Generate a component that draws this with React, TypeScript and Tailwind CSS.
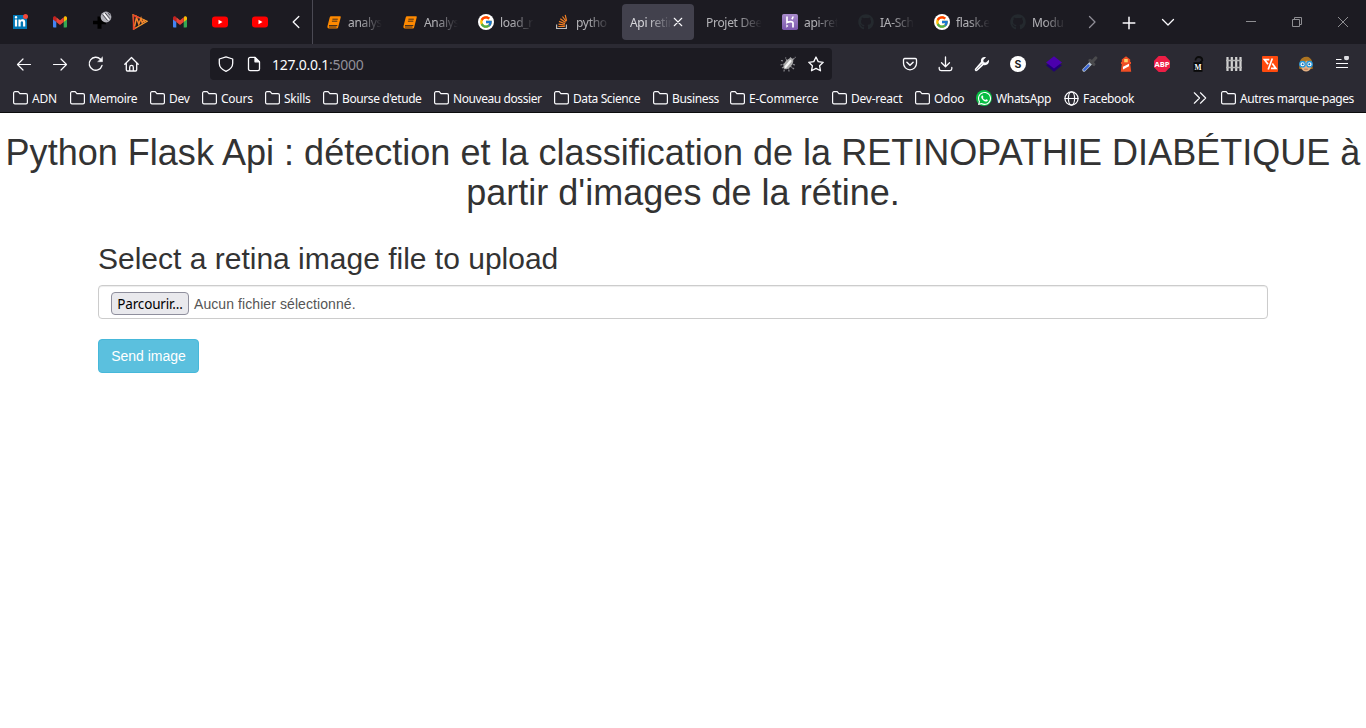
import type { ReactNode } from "react";
import { FcGoogle } from "react-icons/fc";
import { FaGithub, FaLinkedinIn, FaWhatsapp } from "react-icons/fa";

type IconProps = { children: ReactNode; size?: number; stroke?: string };

function Line({ children, size = 16, stroke = "#fbfbfe" }: IconProps) {
  return (
    <svg width={size} height={size} viewBox="0 0 16 16" fill="none" stroke={stroke} strokeWidth="1.3" strokeLinecap="round" strokeLinejoin="round" className="shrink-0">
      {children}
    </svg>
  );
}

function Art({ children }: { children: ReactNode }) {
  return <svg width="16" height="16" viewBox="0 0 16 16" className="shrink-0">{children}</svg>;
}

const Gmail = () => (
  <Art>
    <path d="M1 4v8.500c0 .5.4 1 1 1h2.300V7z" fill="#4285f4" />
    <path d="M15 4v8.500c0 .5-.4 1-1 1h-2.300V7z" fill="#34a853" />
    <path d="M11.700 4v4L15 5.500V4c0-1.600-1.800-2.200-2.800-1.300z" fill="#fbbc04" />
    <path d="M4.300 4v4L1 5.500V4c0-1.600 1.800-2.200 2.800-1.300z" fill="#c5221f" />
    <path d="M4.300 8V3.300L8 6.200l3.700-2.900V8L8 10.900z" fill="#ea4335" />
  </Art>
);

const Youtube = () => (
  <Art>
    <rect x="0" y="2.400" width="16" height="11.200" rx="3" fill="#f00" />
    <path d="M6.500 5.700v4.600l4-2.300z" fill="#fff" />
  </Art>
);

const LinkedIn = () => (
  <span className="relative flex size-[14px] items-center justify-center bg-[#0077b5]">
    <FaLinkedinIn size={12} color="#fff" />
    <span className="absolute -right-px -top-px size-[5px] rounded-full bg-[#f0483a]" />
  </span>
);

const PlusDisc = () => (
  <svg width="20" height="20" viewBox="0 0 20 20">
    <path d="M5.500 6.500h4v4.300h4.500v3.500H9.500v4.500h-4v-4.500H1v-3.500h4.500z" fill="#000" />
    <circle cx="14" cy="7" r="5.400" fill="#b4b4bc" />
    <path d="m10.500 4.500 5 6M13 2.800l5 6M16 2.500l2 3" stroke="#4c4c54" strokeWidth="1" />
    <path d="m11.800 3.500 5 6.300" stroke="#fff" strokeWidth="1.300" />
  </svg>
);

const Sketch = () => (
  <Art>
    <path d="M1 .800 15.200 7.300 2 15Z" fill="none" stroke="#f59a30" strokeWidth="1.200" />
    <path d="m2.500 12.500 2-9 2.300 6.500L9 4.500l1.200 4.500 1.700-2.700.8 1.700" fill="none" stroke="#f4842b" strokeWidth="1.500" />
    <path d="M1.500 1v14l2.500-1.700M1 1l6.500 3" stroke="#e9442a" strokeWidth="1.400" fill="none" />
  </Art>
);

const Book = () => (
  <span className="flex size-4 items-center justify-center pr-px">
    <svg width="14" height="13" viewBox="0 0 14 13">
      <path d="M4.200.300h8.700c.7 0 1 .5.800 1.200l-2.600 9.900c-.2.700-.8 1.100-1.400 1.100H2C.700 12.500.100 11.300.5 10L2.700 1.500C2.900.700 3.500.3 4.200.3Z" fill="#ff8a00" />
      <path d="M5.400 3.200h5.400M4.900 5.200h5.400M2 9.500h8.300M2 11h7.500" stroke="#1c1b22" strokeWidth=".8" />
    </svg>
  </span>
);

const GoogleBadge = () => (
  <span className="flex size-4 items-center justify-center rounded-full bg-white"><FcGoogle size={14} /></span>
);

const StackOverflow = () => (
  <Art>
    <path d="M2.600 10.500v4h9.800v-4" fill="none" stroke="#bcbbbb" strokeWidth="1.200" />
    <path d="M4.300 12.500h6.500M4.500 10.100l6.400 1M5 7.400l6 2.400M6.300 4.800l5.200 3.800M8.500 2.500l3.700 5M11.200.9l1.400 6" stroke="#f48024" strokeWidth="1.200" />
  </Art>
);

const Heroku = () => (
  <Art>
    <defs><linearGradient id="heroku" x2="0" y2="1"><stop stopColor="#a88bcb" /><stop offset="1" stopColor="#7c58ad" /></linearGradient></defs>
    <rect width="16" height="16" rx="1.800" fill="url(#heroku)" />
    <path d="M5 2.500v6c2-1 6-1.700 6 .6v4.400M11 2.500c-.1 1.200-.6 2-1.200 2.700" fill="none" stroke="#fff" strokeWidth="1.700" />
    <path d="M4.300 10.300 6.400 12l-2.100 1.700z" fill="#fff" />
  </Art>
);

const Github = () => <FaGithub size={16} color="#24292e" />;

const pinned = [LinkedIn, Gmail, PlusDisc, Sketch, Gmail, Youtube, Youtube];

const tabs: { label: string; Icon?: () => ReactNode; active?: boolean }[] = [
  { label: "analys", Icon: Book },
  { label: "Analys", Icon: Book },
  { label: "load_r", Icon: GoogleBadge },
  { label: "pytho", Icon: StackOverflow },
  { label: "Api retin", active: true },
  { label: "Projet Dee" },
  { label: "api-ret", Icon: Heroku },
  { label: "IA-Sch", Icon: Github },
  { label: "flask.e", Icon: GoogleBadge },
  { label: "Modu", Icon: Github },
];

function TabBar() {
  return (
    <div className="flex h-11 items-center bg-[#1c1b22]">
      {pinned.map((Icon, i) => (
        <div key={i} className={i === 2 ? "flex w-10 items-center justify-center pb-1 pl-1" : "flex w-10 items-center justify-center"}><Icon /></div>
      ))}
      <div className="flex w-8 items-center justify-center">
        <Line><path d="M10.800 2.500 5.200 8l5.600 5.500" /></Line>
      </div>
      <div className="h-full w-[6px] border-l border-[#4a4953]" />
      <div className="flex gap-1">
        {tabs.map(({ label, Icon, active }, i) => (
          <div key={i} className={active ? "flex h-9 w-[72px] items-center rounded bg-[#42414d] pl-2" : "flex h-9 w-[72px] items-center pl-2"}>
            {Icon && <span className="mr-[6px] flex w-4 shrink-0"><Icon /></span>}
            <span className={
              active
                ? "w-[42px] whitespace-nowrap pt-[2px] tracking-[-0.3px] text-[#fbfbfe] [mask-image:linear-gradient(to_right,#000c_40%,transparent_100%)]"
                : Icon
                  ? "w-[34px] whitespace-nowrap pt-[2px] tracking-[-0.3px] text-[#fbfbfe] [mask-image:linear-gradient(to_right,#000a_35%,transparent_100%)]"
                  : "w-[56px] whitespace-nowrap pt-[2px] tracking-[-0.3px] text-[#fbfbfe] [mask-image:linear-gradient(to_right,#000a_55%,transparent_100%)]"
            }>{label}</span>
            {active && <Line size={12}><path d="M3 3l10 10M13 3 3 13" strokeWidth="1.500" /></Line>}
          </div>
        ))}
      </div>
      <div className="flex w-[34px] justify-center pl-px"><Line stroke="#908f98"><path d="M5.500 2.500 11 8l-5.500 5.500" /></Line></div>
      <div className="flex w-10 justify-center pl-px pt-px"><Line><path d="M8 2.200v11.600M2.200 8h11.600" strokeWidth="1.500" /></Line></div>
      <div className="flex w-10 justify-center"><Line><path d="M2.500 5.500 8 11l5.500-5.500" /></Line></div>
      <div className="ml-auto flex">
        <div className="flex w-[46px] justify-center"><svg width="10" height="10"><path d="M0 4.500h10" stroke="#8e8e92" /></svg></div>
        <div className="flex w-[46px] justify-center"><svg width="10" height="10" fill="none" stroke="#8e8e92"><path d="M.5 2.500h7v7h-7zM2.500 2.500v-2h7v7h-2" /></svg></div>
        <div className="flex w-[46px] justify-center"><svg width="10" height="10" stroke="#8e8e92"><path d="m0 0 10 10M10 0 0 10" /></svg></div>
      </div>
    </div>
  );
}

const Bug = () => (
  <Art>
    <path d="M1 4.500 3.500 5M.5 9l4-1M4 15.500l.5-4M9 15.500 8.500 11M7 5 5.500 1.500M15 9l-5-1.500M14 13l-4-3M10 3l1-2.500M13 3.500l2.500-2.500M2 12l3-2" stroke="#8b8b90" strokeWidth="1.200" strokeDasharray="2 .7" />
    <ellipse cx="8.300" cy="7.700" rx="3.600" ry="6.600" transform="rotate(39 8.300 7.700)" fill="#acacac" />
    <path d="M5.500 11 10.500 5" stroke="#f4f4f4" strokeWidth="2.200" strokeLinecap="round" />
  </Art>
);

const extensions: ReactNode[] = [
  <Line key="pocket"><path d="M2.700 2.500h10.600c.7 0 1.200.5 1.200 1.200v3.600a6.500 6.500 0 0 1-13 0V3.700c0-.7.500-1.200 1.200-1.200Z" /><path d="m4.900 6.300 3.100 3 3.100-3" strokeWidth="1.500" /></Line>,
  <Line key="download"><path d="M7.500 1v9.500M3.500 6.800l4 3.900 4-3.900M1.200 11.500v1.300c0 1.100.7 1.800 1.800 1.800h9c1.100 0 1.800-.7 1.800-1.800v-1.300" /></Line>,
  <Art key="wrench"><path d="M14.900 3.800 12 6.600 9.700 6.200 9.300 4 12 1.200C8.800.2 6.300 2.700 7 5.800L1.200 12.500C-.2 14.200 1.900 16.100 3.400 14.800L9.700 9c3.400.9 6.100-1.800 5.200-5.200Z" fill="#fbfbfe" /><path d="m2.300 13.700 5.900-6.100" stroke="#2b2a33" strokeWidth=".5" /></Art>,
  <Art key="s"><circle cx="8" cy="8" r="8" fill="#fff" /><text x="8" y="11.800" textAnchor="middle" fontSize="10.500" fontWeight="700" fontFamily="Inter, sans-serif" fill="#222">S</text></Art>,
  <Art key="layers"><path d="m0 9.300 8-5 8 5-8 6.500z" fill="#210075" /><path d="m0 6.600 8-6.300 8 6.300-8 6z" fill="#4b00ad" /></Art>,
  <Art key="dropper"><path d="M2 14 9 7" stroke="#b9c6d3" strokeWidth="3.300" strokeLinecap="round" /><path d="m2.300 13.700 4.200-4.200" stroke="#3b66d8" strokeWidth="2.300" strokeLinecap="round" /><path d="m8 4.500 3.800 3.800M10.500 5.500 13.700 2" stroke="#4a4a4d" strokeWidth="3.200" strokeLinecap="round" /></Art>,
  <Art key="lighthouse"><path d="M3.800 3.500 8 .3l4.200 3.200V6h.8v2h-.8l1 7.700H2.800L3.800 8H3V6h.8z" fill="#f04e24" /><path d="M6.200 3h3.600v3.300H6.200z" fill="#ffd36b" /><path d="m5 10.800 6-3v2.500l-6 3.200z" fill="#fff" /></Art>,
  <Art key="abp"><path d="M4.700 0h6.600L16 4.700v6.600L11.300 16H4.700L0 11.300V4.700z" fill="#ed1e45" /><text x="8" y="10.800" textAnchor="middle" fontSize="7.600" fontWeight="700" fontFamily="Open Sans, sans-serif" fill="#fff">ABP</text></Art>,
  <Art key="lock"><path d="M5.500 4.500C5.300-.3 12.300 0 12.300 4.500L9.800 7" fill="none" stroke="#0b0b0b" strokeWidth="1.800" /><rect x="3.500" y="6.200" width="9" height="9.600" fill="#090909" /><text x="8" y="13.700" textAnchor="middle" fontSize="7.500" fontWeight="700" fontFamily="Liberation Serif, serif" fill="#fff">M</text></Art>,
  <Art key="fence"><path d="M1.500 1v14M5.800 1v14M10.200 1v14M14.500 1v14" stroke="#d2d2d2" strokeWidth="2.200" /><path d="M0 4.500h16M0 11.500h16" stroke="#b5b5b5" strokeWidth="1.500" /></Art>,
  <Art key="code"><rect width="16" height="16" rx="1" fill="#ff4a0d" /><path d="M10.300 2.500 6.200 13.500" stroke="#fff" strokeWidth="1.700" /><path d="M7.300 3.700H2.500L6 8.300M10.300 7.500l3.500 4.800H9" fill="none" stroke="#fff" strokeWidth="1.800" /></Art>,
  <Art key="face"><path d="M1 12.500C2.500 8 .8 4.500 4 2.300 7 .3 10 .5 12 2.300c3.300 2.500 1.500 6 3 10.200l-3.500 1h-7z" fill="#ad7421" /><path d="M3.200 6.500C6 6.500 8 5.700 9 4.500c1 1 2.500 1.700 4 2v4.700c-1 5.700-8.800 5.700-9.800 0z" fill="#e6b183" /><circle cx="4.500" cy="8.200" r="2.700" fill="#fff" stroke="#2298df" strokeWidth="1.300" /><circle cx="11.500" cy="8.200" r="2.700" fill="#fff" stroke="#2298df" strokeWidth="1.300" /><circle cx="4.700" cy="8.200" r="1" fill="#1967a5" /><circle cx="11.300" cy="8.200" r="1" fill="#1967a5" /><path d="M6.200 13.200h3.600" stroke="#b66c50" /></Art>,
  <Art key="menu"><path d="M2 3.500h5.500M2 7.500h12M2 11.500h12" stroke="#fbfbfe" strokeWidth="1.200" /><circle cx="12.500" cy="1.800" r="2.500" fill="#dddde2" /></Art>,
];

function NavBar() {
  return (
    <div className="flex h-10 items-center bg-[#2b2a33]">
      <div className="flex w-[210px] items-center gap-5 pl-4">
        <Line><path d="M14.500 8.500H1.800M7 3 1.500 8.500 7 14" strokeWidth="1.200" /></Line>
        <Line><path d="M1.500 8.500h12.700M9 3 14.500 8.500 9 14" strokeWidth="1.200" /></Line>
        <Line><path d="M14 9.500A6.500 6.500 0 1 1 12.500 3.300" /><path d="M14.500 1.200v4.500H10z" fill="#fbfbfe" strokeWidth=".5" /></Line>
        <Line><path d="M.8 8.200 7.500 1.500l6.700 6.700M2.300 7.300v6.500c0 .8.500 1.200 1.200 1.200h8c.7 0 1.200-.5 1.200-1.200V7.300M5.700 14.800v-3.600a1.800 1.800 0 0 1 3.600 0v3.600" /></Line>
      </div>
      <div className="flex h-8 w-[622px] items-center rounded bg-[#1c1b22] pl-2 pr-2">
        <Line><path d="M8 .9 14.700 3v4.300c0 3.700-3 6.500-6.700 8.100C4.300 13.800 1.300 11 1.300 7.300V3z" /></Line>
        <span className="ml-3 flex"><Line><path d="M4.200 1.400H9l4.500 4.500v7c0 1-.6 1.700-1.700 1.700H4.200c-1.100 0-1.700-.7-1.700-1.700V3.100c0-1 .6-1.700 1.700-1.700Z" /><path d="M9 1.500v4.300h4.300z" fill="#fbfbfe" /></Line></span>
        <span className="ml-[10px] pt-[2px] text-[14px] leading-5 tracking-[-0.26px] text-[#fbfbfe]">127.0.0.1<span className="text-[#918f99]">:5000</span></span>
        <span className="ml-auto flex gap-3"><Bug /><Line><path d="m8 1 2.200 4.600 5 .7-3.600 3.500.9 5L8 12.400l-4.500 2.400.9-5L.8 6.300l5-.7z" /></Line></span>
      </div>
      <div className="ml-[70px] flex gap-5">{extensions}</div>
    </div>
  );
}

const Folder = () => (
  <svg width="15" height="14" viewBox="0 0 15 14" fill="none" stroke="#fbfbfe" strokeWidth="1.200" strokeLinejoin="round" className="shrink-0">
    <path d="M2 .700h3.200l1.700 1.900H13c.9 0 1.400.5 1.400 1.400v7.500c0 .9-.5 1.400-1.400 1.400H2c-.9 0-1.400-.5-1.400-1.400V2.100C.6 1.200 1.100.7 2 .7Z" />
  </svg>
);

const bookmarks = [
  { label: "ADN", style: "w-[57px]" },
  { label: "Memoire", style: "w-[80px] tracking-[-0.35px]" },
  { label: "Dev", style: "w-[52px]" },
  { label: "Cours", style: "w-[63px]" },
  { label: "Skills", style: "w-[58px]" },
  { label: "Bourse d'etude", style: "w-[111px] tracking-[-0.4px]" },
  { label: "Nouveau dossier", style: "w-[120px] tracking-[-0.42px]" },
  { label: "Data Science", style: "w-[99px] tracking-[-0.4px]" },
  { label: "Business", style: "w-[77px] tracking-[-0.35px]" },
  { label: "E-Commerce", style: "w-[102px]" },
  { label: "Dev-react", style: "w-[83px]" },
  { label: "Odoo", style: "w-[61px]" },
];

function BookmarksBar() {
  return (
    <div className="flex h-[29px] items-center whitespace-nowrap border-b border-[#0c0c0d] bg-[#2b2a33] pl-[13px] tracking-[-0.25px] text-[#fbfbfe]">
      {bookmarks.map(({ label, style }) => (
        <div key={label} className={`flex shrink-0 items-center gap-1 ${style}`}><Folder /><span className="pt-[2px]">{label}</span></div>
      ))}
      <div className="flex w-[88px] shrink-0 items-center gap-1 tracking-[-0.35px]">
        <span className="flex size-4 items-center justify-center rounded-full bg-[#08bd43]"><FaWhatsapp size={15} color="#fff" /></span><span className="pt-[2px]">WhatsApp</span>
      </div>
      <div className="flex w-[129px] shrink-0 items-center gap-1 tracking-[-0.35px]">
        <Line size={15}><circle cx="8" cy="8" r="7" /><ellipse cx="8" cy="8" rx="3.300" ry="7" /><path d="M1 8h14" /></Line><span className="pt-[2px]">Facebook</span>
      </div>
      <div className="flex w-7 shrink-0"><Line size={14}><path d="m1.500 2 6 6-6 6M8.500 2l6 6-6 6" /></Line></div>
      <div className="flex shrink-0 items-center gap-1 tracking-[-0.42px]"><Folder /><span className="pt-[2px]">Autres marque-pages</span></div>
    </div>
  );
}

export default function App() {
  return (
    <div className="flex h-[728px] w-[1366px] flex-col overflow-hidden bg-white">
      <header className="shrink-0 select-none font-['Noto_Sans',sans-serif] text-[12px] leading-4">
        <TabBar />
        <NavBar />
        <BookmarksBar />
      </header>
      <main className="font-['Liberation_Sans',Arial,sans-serif] text-[14px] leading-5 text-[#333]">
        <h1 className="-mx-1 mb-[30px] mt-5 text-center text-[36px] font-normal leading-[1.1] tracking-[0.02px]">
          Python Flask Api : détection et la classification de la RETINOPATHIE DIABÉTIQUE à<br />partir d'images de la rétine.
        </h1>
        <div className="mx-auto w-[1170px]">
          <h2 className="mb-[10px] text-[30px] font-normal leading-[1.1]">Select a retina image file to upload</h2>
          <div className="flex h-[34px] items-center rounded border border-[#ccc] pl-3 pt-[2px] text-[#555] shadow-[inset_0_1px_1px_rgba(0,0,0,0.075)]">
            <button className="mr-[5px] flex h-[23px] w-[78px] items-center justify-center rounded border border-[#8f8f9d] bg-[#e9e9ed] pt-px font-['Noto_Sans',sans-serif] text-[13.500px] tracking-[-0.150px] text-black">Parcourir...</button>
            <span className="pt-px tracking-[0.080px]">Aucun fichier sélectionné.</span>
          </div>
          <button className="mt-5 block h-[34px] w-[101px] rounded border border-[#46b8da] bg-[#5bc0de] text-white">Send image</button>
        </div>
      </main>
    </div>
  );
}
